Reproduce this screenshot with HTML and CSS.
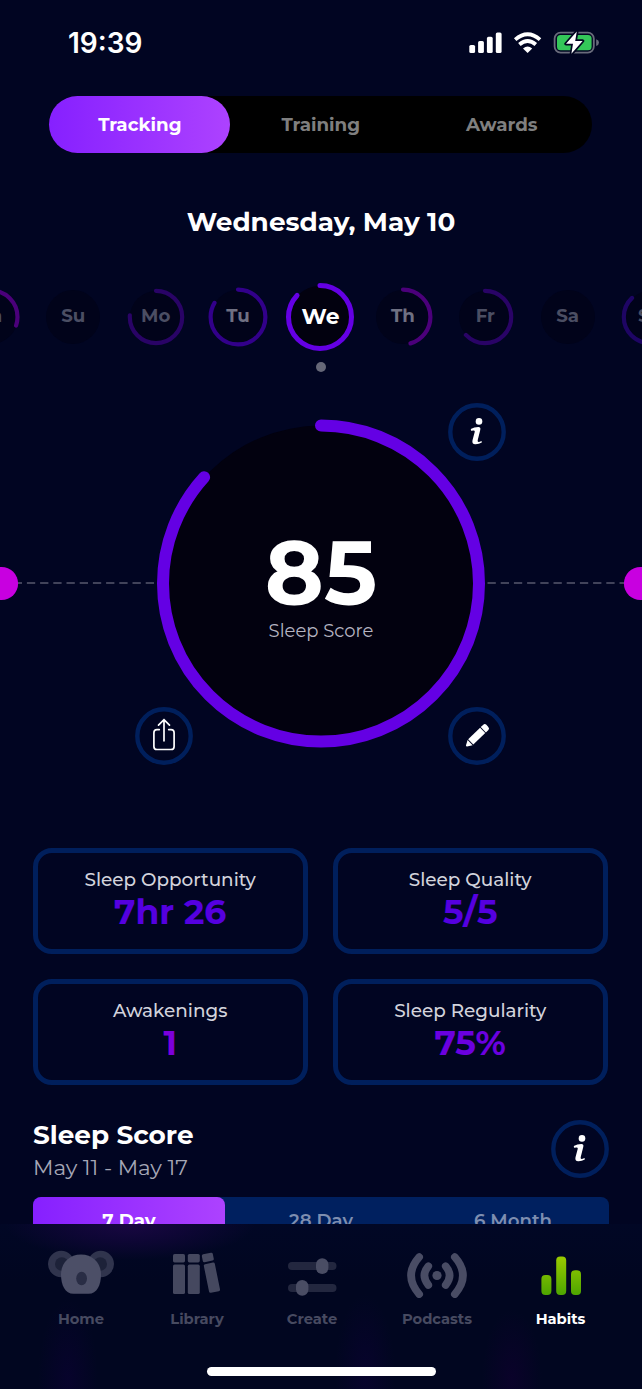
FILE: index.html
```html
<!DOCTYPE html>
<html lang="en">
<head>
<meta charset="utf-8">
<title>Sleep tracking</title>
<link rel="stylesheet" href="styles.css">
</head>
<body>
<svg class="defs" width="0" height="0">
  <symbol id="info" viewBox="0 0 58 58">
    <circle class="ring" cx="29" cy="29" r="26.7"/>
    <circle cx="31" cy="18.4" r="3.3" fill="#fff"/>
    <path fill="#fff" d="M22.8 26 Q26.2 24.2 30.4 24 Q32.9 24 32.3 26.8 L29.7 37.3 Q29.3 39.2 31 38.9 L33.6 38 L33.8 39.6 Q30.8 41.4 27.2 41.3 Q23.7 41.2 24.5 37.3 L26.7 28.9 Q27.1 27.3 25.8 27.4 L23 27.8 Z"/>
  </symbol>
</svg>
<main class="screen">
  <div class="content">
    <header class="status">
      <span class="time">19:39</span>
      <svg class="status-icons" width="132" height="24" viewBox="0 0 132 24">
        <g fill="#fff">
          <rect x="1.3" y="14" width="5.8" height="8" rx="1.6"/>
          <rect x="10.1" y="10" width="5.8" height="12" rx="1.6"/>
          <rect x="18.9" y="5.8" width="5.8" height="16.2" rx="1.6"/>
          <rect x="27.8" y="1.4" width="5.8" height="20.6" rx="1.6"/>
          <path d="M59.6 22 L55 17.4 Q59.6 13.8 64.2 17.4 Z"/>
        </g>
        <g fill="none" stroke="#fff" stroke-width="3.8">
          <path d="M47.2 8.6 Q59.6 -2.2 72 8.6"/>
          <path d="M51.4 13.5 Q59.6 6.4 67.8 13.5"/>
        </g>
        <rect x="86.6" y="1.6" width="39.2" height="20" rx="6" fill="none" stroke="#696b7b" stroke-width="1.8"/>
        <path d="M128.2 8.2 Q131 9.2 131 11.6 Q131 14 128.2 15 Z" fill="#696b7b"/>
        <rect x="89" y="3.9" width="34.6" height="15.4" rx="3.6" fill="#34c759"/>
        <path d="M108.8 0.6 L98 12.8 H105 L103.4 22.8 L114.6 10 H107.2 Z" fill="#fff" stroke="#010520" stroke-width="3.4" paint-order="stroke" stroke-linejoin="round"/>
      </svg>
    </header>
    <nav class="modes">
      <a class="mode active">Tracking</a>
      <a class="mode">Training</a>
      <a class="mode">Awards</a>
    </nav>
    <h1 class="date">Wednesday, May 10</h1>
    <div class="week">
      <div class="day far"><svg viewBox="0 0 70 70"><circle class="face" cx="35" cy="35" r="27"/><circle class="arc pink" cx="35" cy="35" r="26.5" pathLength="100" stroke-dasharray="30.3 100"/></svg><span>Sa</span></div>
      <div class="day far"><svg viewBox="0 0 70 70"><circle class="face" cx="35" cy="35" r="27"/></svg><span>Su</span></div>
      <div class="day far"><svg viewBox="0 0 70 70"><circle class="face" cx="35" cy="35" r="26"/><circle class="arc violet" cx="35" cy="35" r="26.2" pathLength="100" stroke-dasharray="76 100"/></svg><span>Mo</span></div>
      <div class="day near"><svg viewBox="0 0 70 70"><circle class="face" cx="35" cy="35" r="27"/><circle class="arc" cx="35" cy="35" r="27.4" pathLength="100" stroke-dasharray="83.6 100"/></svg><span>Tu</span></div>
      <div class="day today"><svg viewBox="0 0 70 70"><circle class="face" cx="35" cy="35" r="31"/><circle class="arc" cx="35" cy="35" r="31.5" pathLength="100" stroke-dasharray="87 100"/></svg><span>We</span></div>
      <div class="day near"><svg viewBox="0 0 70 70"><circle class="face" cx="35" cy="35" r="27"/><circle class="arc pink" cx="35" cy="35" r="27.4" pathLength="100" stroke-dasharray="45.6 100"/></svg><span>Th</span></div>
      <div class="day far"><svg viewBox="0 0 70 70"><circle class="face" cx="35" cy="35" r="26"/><circle class="arc violet" cx="35" cy="35" r="26.2" pathLength="100" stroke-dasharray="63 100"/></svg><span>Fr</span></div>
      <div class="day far"><svg viewBox="0 0 70 70"><circle class="face" cx="35" cy="35" r="27"/></svg><span>Sa</span></div>
      <div class="day far"><svg viewBox="0 0 70 70"><circle class="face" cx="35" cy="35" r="26"/><circle class="arc indigo" cx="35" cy="35" r="26.2" pathLength="100" stroke-dasharray="88 100"/></svg><span>Su</span></div>
    </div>
    <div class="dot"></div>
    <section class="dial">
      <svg class="track" width="642" height="363" viewBox="0 0 642 363">
        <g stroke="#41435a" stroke-width="2" stroke-dasharray="8.3 4.9">
          <path d="M154 180 H18"/><path d="M487.5 180 H642"/>
        </g>
        <circle cx="1.5" cy="180.5" r="16.6" fill="#c800e0"/>
        <circle cx="640.5" cy="180.5" r="16.6" fill="#c800e0"/>
        <circle cx="321" cy="180.6" r="158" fill="#02010f"/>
        <circle cx="321" cy="180.6" r="158" fill="none" stroke="#6400e4" stroke-width="12" stroke-linecap="round" pathLength="360" stroke-dasharray="312.3 360" transform="rotate(-90 321 180.6)"/>
      </svg>
      <div class="score">
        <strong>85</strong>
        <span>Sleep Score</span>
      </div>
      <svg class="btn top-right" viewBox="0 0 58 58"><use href="#info"/></svg>
      <svg class="btn bottom-left" viewBox="0 0 58 58">
        <circle class="ring" cx="29" cy="29" r="26.7"/>
        <path d="M24.3 22.6 H22 Q18.9 22.6 18.9 25.7 V39.4 Q18.9 42.5 22 42.5 H36 Q39.1 42.5 39.1 39.4 V25.7 Q39.1 22.6 36 22.6 H33.7 M29 33.8 V13 M23.5 18.2 L29 12.7 L34.5 18.2" fill="none" stroke="#fff" stroke-width="1.7" stroke-linecap="round"/>
      </svg>
      <svg class="btn bottom-right" viewBox="0 0 58 58">
        <circle class="ring" cx="29" cy="29" r="26.7"/>
        <g fill="#fff" transform="translate(18.2 39.3) rotate(-44)">
          <path d="M0.4 -0.8 L5.4 -3.6 V3.6 L0.4 0.8 Q-0.4 0 0.4 -0.8 Z"/>
          <rect x="6.3" y="-3.7" width="16.6" height="7.4"/>
          <path d="M23.8 -3.7 H27 Q29.4 -3.7 29.4 -1.4 V1.4 Q29.4 3.7 27 3.7 H23.8 Z"/>
        </g>
      </svg>
    </section>
    <section class="cards">
      <article class="card"><span class="label">Sleep Opportunity</span><b class="blue">7hr 26</b></article>
      <article class="card"><span class="label">Sleep Quality</span><b class="blue">5/5</b></article>
      <article class="card"><span class="label">Awakenings</span><b class="purple">1</b></article>
      <article class="card"><span class="label">Sleep Regularity</span><b class="mid">75%</b></article>
    </section>
    <section class="history">
      <div>
        <h2>Sleep Score</h2>
        <p>May 11 - May 17</p>
      </div>
      <svg class="btn" viewBox="0 0 58 58"><use href="#info"/></svg>
    </section>
    <div class="ranges">
      <a class="range active">7 Day</a>
      <a class="range">28 Day</a>
      <a class="range">6 Month</a>
    </div>
  </div>
  <nav class="tabbar">
    <div class="tabs">
      <a class="tab">
        <svg width="68" height="48" viewBox="0 0 68 48">
          <circle cx="14.2" cy="14" r="13.2" fill="#30344d"/><circle cx="53.8" cy="14" r="13.2" fill="#30344d"/>
          <circle cx="14.8" cy="14" r="6.8" fill="#1d2239"/><circle cx="53.2" cy="14" r="6.8" fill="#1d2239"/>
          <path d="M34 4.6 C46 4.6 54 13.5 54 24.5 C54 35 50 43.8 41.5 43.8 H26.5 C18 43.8 14 35 14 24.5 C14 13.5 22 4.6 34 4.6 Z" fill="#4c4f67"/>
          <ellipse cx="34.6" cy="28.5" rx="5.4" ry="6.8" fill="#292d45"/>
        </svg>
        <span>Home</span>
      </a>
      <a class="tab">
        <svg width="68" height="48" viewBox="0 0 68 48" fill="#45485f">
          <rect x="10" y="4" width="12" height="8.4" rx="1.6"/><rect x="10" y="14.6" width="12" height="29.4" rx="1.6"/>
          <rect x="24.8" y="4" width="12" height="8.4" rx="1.6"/><rect x="24.8" y="14.6" width="12" height="29.4" rx="1.6"/>
          <g transform="rotate(-11.5 39 6)"><rect x="38.8" y="4.6" width="11.2" height="8" rx="1.6"/><rect x="38.8" y="14.6" width="11.2" height="29.2" rx="1.6"/></g>
        </svg>
        <span>Library</span>
      </a>
      <a class="tab">
        <svg width="68" height="48" viewBox="0 0 68 48">
          <rect x="10" y="12" width="48.5" height="8" rx="4" fill="#23273f"/><rect x="10" y="34" width="48.5" height="8" rx="4" fill="#23273f"/>
          <rect x="38" y="8.2" width="12.4" height="15.8" rx="6.2" fill="#4a4d64"/><rect x="18" y="30" width="12.4" height="15.8" rx="6.2" fill="#4a4d64"/>
        </svg>
        <span>Create</span>
      </a>
      <a class="tab">
        <svg width="68" height="48" viewBox="0 0 68 48" fill="none" stroke="#494c64" stroke-width="7.6" stroke-linecap="round">
          <circle cx="34" cy="25.5" r="4.6" fill="#494c64" stroke="none"/>
          <path d="M25.3 16.2 Q17.5 25.5 25.3 35"/><path d="M42.7 16.2 Q50.5 25.5 42.7 35"/>
          <path d="M16.2 7 Q0 25.5 16.2 44.2"/><path d="M51.8 7 Q68 25.5 51.8 44.2"/>
        </svg>
        <span>Podcasts</span>
      </a>
      <a class="tab active">
        <svg width="68" height="48" viewBox="0 0 68 48">
          <defs><linearGradient id="lime" gradientUnits="userSpaceOnUse" x1="0" y1="6" x2="0" y2="45"><stop stop-color="#9bcb00"/><stop offset="1" stop-color="#4da500"/></linearGradient></defs>
          <g fill="url(#lime)"><rect x="14.4" y="25" width="10" height="20" rx="4"/><rect x="29.2" y="6.4" width="10" height="38.6" rx="4"/><rect x="44" y="20.2" width="10" height="24.8" rx="4"/></g>
        </svg>
        <span>Habits</span>
      </a>
    </div>
    <div class="home-bar"></div>
  </nav>
</main>
</body>
</html>
```
FILE: styles.css
```css
* { box-sizing: border-box; }
body { margin: 0; background: #010522; color: #fff; font-family: Montserrat, Inter, "Open Sans", sans-serif; }
.defs { display: block; height: 0; }
.screen { width: 642px; height: 1389px; overflow: hidden; }
.content { height: 1224px; overflow: hidden; }

.status { display: flex; justify-content: space-between; align-items: center; height: 85px; padding: 0 42px 0 68px; }
.time { font-family: Inter, sans-serif; font-size: 28px; font-weight: 600; }

.modes { display: flex; width: 543px; height: 57.5px; margin: 10.5px 0 0 49.3px; border-radius: 29px; background: #000; }
.mode { flex: 1; display: grid; place-items: center; border-radius: 29px; color: #7f7f7f; font-size: 18.3px; font-weight: 700; }
.mode.active { color: #fff; background: linear-gradient(90deg, #8620ff, #ad42ff); }

.date { margin: 49px 0 39.5px; line-height: 40px; text-align: center; font-size: 26.3px; font-weight: 700; }

.week { display: flex; justify-content: center; margin: 0 -60px; padding-right: 1px; }
.day { display: grid; place-items: center; flex: 0 0 82.4px; height: 70px; font-size: 18.2px; font-weight: 700; }
.day > * { grid-area: 1 / 1; }
.day svg { width: 70px; height: 70px; }
.day span { padding-bottom: 2px; color: #4b4e63; }
.day.near span { color: #6f7082; }
.day.today span { color: #fff; font-size: 21.8px; }
.face { fill: #01031a; }
.today .face { fill: #02010f; }
.arc { fill: none; stroke: #32008a; stroke-width: 4.2; stroke-linecap: round; transform: rotate(-90deg); transform-origin: 35px 35px; }
.today .arc { stroke: #6400e4; stroke-width: 5; }
.arc.pink { stroke: #4b007a; }
.arc.violet { stroke: #290366; }
.arc.indigo { stroke: #1e0564; }

.dot { width: 10px; height: 10px; margin: 10px auto 0; border-radius: 50%; background: #666878; }

.dial { display: grid; place-items: center; height: 363px; margin-top: 31px; }
.dial > * { grid-area: 1 / 1; }
.score { display: flex; flex-direction: column; align-items: center; padding-top: 6px; }
.score strong { font-size: 89.5px; font-weight: 700; line-height: 88px; }
.score span { color: #b5b4c1; font-size: 18px; font-weight: 400; line-height: 28px; }
.btn { width: 58px; height: 58px; }
.ring { fill: #010522; stroke: #001f5c; stroke-width: 4.4; }
.top-right { place-self: start end; margin-right: 136px; }
.bottom-left { place-self: end start; margin: 0 0 1px 135px; }
.bottom-right { place-self: end end; margin: 0 136px 1px 0; }

.cards { display: grid; grid-template-columns: 275px 275px; gap: 25.4px 25px; margin: 82px 0 0 32.7px; }
.card { display: flex; flex-direction: column; align-items: center; height: 106.2px; padding-top: 15px; border: 5px solid #001f5c; border-radius: 19px; }
.label { color: #d2d3dc; font-size: 18.4px; font-weight: 500; line-height: 24px; }
.card b { font-size: 34.5px; line-height: 41px; }
.blue { color: #5500e0; }
.mid { color: #6b00e0; }
.purple { color: #7c00dc; }

.history { display: flex; justify-content: space-between; height: 58px; margin: 35px 33px 0; }
.history h2 { margin: 0; font-size: 26.3px; line-height: 30px; }
.history p { margin: 0; color: #a5a7b6; font-size: 21.4px; font-weight: 400; line-height: 34px; }

.ranges { display: flex; width: 576px; height: 54px; margin: 18.4px 0 0 33px; border-radius: 8px; background: #00205f; }
.range { flex: 1; padding-top: 14.5px; border-radius: 8px; text-align: center; color: #7e8eb0; font-size: 18.2px; font-weight: 600; line-height: 20px; }
.range.active { color: #fff; font-weight: 700; background: linear-gradient(90deg, #8620ff, #ad42ff); }

.tabbar { display: flex; flex-direction: column; height: 165px;
  background:
    radial-gradient(ellipse 125px 36px at 130px 0, #190742 0, #12063acc 45%, transparent 100%),
    radial-gradient(ellipse 30px 80px at 68px 155px, #07032c 0, transparent 100%),
    radial-gradient(ellipse 30px 80px at 365px 150px, #07032c 0, transparent 100%),
    radial-gradient(ellipse 30px 70px at 512px 155px, #0a022a 0, transparent 100%),
    linear-gradient(#010725, #010620 35%); }
.tabs { display: grid; grid-template-columns: 116px 116px 114px 136px 111px; padding: 26px 0 0 23px; }
.tab { display: flex; flex-direction: column; align-items: center; color: #474a60; font-size: 14.7px; font-weight: 700; line-height: 20px; }
.tab svg { margin-bottom: 11px; }
.tab.active { color: #fff; }
.home-bar { width: 229px; height: 9px; margin: 38px auto 0; border-radius: 5px; background: #fff; }
```
